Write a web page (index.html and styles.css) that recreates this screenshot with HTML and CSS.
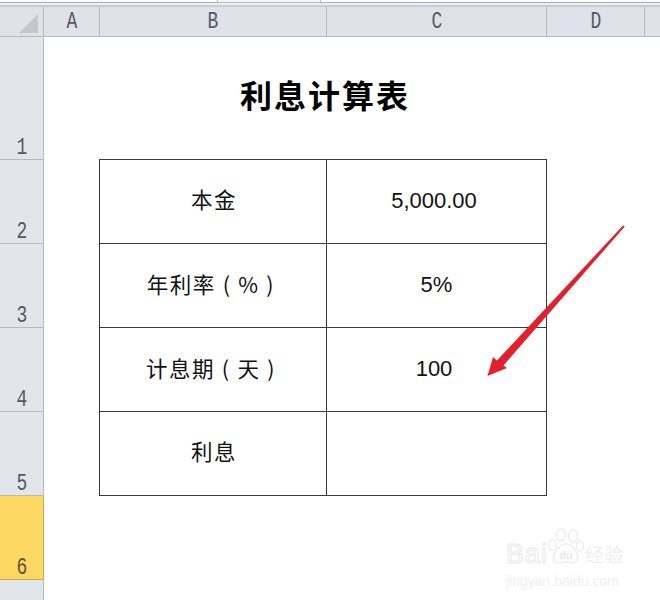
FILE: index.html
```html
<!DOCTYPE html>
<html lang="zh">
<head>
<meta charset="utf-8">
<title>利息计算表</title>
<link rel="stylesheet" href="styles.css">
</head>
<body>
<div class="formula-bar"><div class="formula-tab"></div></div>
<div class="sheet">
  <div class="corner"><svg class="corner-mark" width="20" height="20" viewBox="0 0 20 20"><path d="M0 20 L19 1 V20 Z" fill="#c2c7cb"/></svg></div>
  <div class="col-head"><span class="hd">A</span></div>
  <div class="col-head"><span class="hd">B</span></div>
  <div class="col-head"><span class="hd">C</span></div>
  <div class="col-head"><span class="hd">D</span></div>
  <div class="col-head col-last"></div>

  <div class="row-head row-1"><span class="hd">1</span></div>
  <div class="cell a"></div>
  <div class="cell title">利息计算表</div>
  <div class="cell d"></div>

  <div class="row-head"><span class="hd">2</span></div>
  <div class="cell a"></div>
  <div class="cell box label box-top">本金</div>
  <div class="cell box value box-top">5,000.00</div>
  <div class="cell d"></div>

  <div class="row-head"><span class="hd">3</span></div>
  <div class="cell a"></div>
  <div class="cell box label label-long">年利率 ( % )</div>
  <div class="cell box value value-pct">5%</div>
  <div class="cell d"></div>

  <div class="row-head"><span class="hd">4</span></div>
  <div class="cell a"></div>
  <div class="cell box label label-long">计息期 ( 天 )</div>
  <div class="cell box value">100</div>
  <div class="cell d"></div>

  <div class="row-head"><span class="hd">5</span></div>
  <div class="cell a"></div>
  <div class="cell box label">利息</div>
  <div class="cell box value"></div>
  <div class="cell d"></div>

  <div class="row-head row-active"><span class="hd">6</span></div>
  <div class="cell blank"></div>

  <div class="row-head row-rest"></div>
  <div class="cell blank"></div>
</div>

<svg class="arrow" width="660" height="600" viewBox="0 0 660 600">
  <path d="M624.800 226.500 L503.500 365.500 L507 368 L487.500 376 L493 357 L497 360.500 L623 225.500 Z" fill="#e1202d"/>
</svg>

<div class="watermark">
  <div class="wm-main">
    <span class="wm-bai">Bai</span>
    <svg class="wm-paw" width="36" height="40" viewBox="0 0 36 40">
      <g fill="#fff" stroke="#ededed" stroke-width="1.500">
        <ellipse cx="4.500" cy="17" rx="4" ry="5.500"/>
        <ellipse cx="13" cy="7" rx="4.500" ry="6"/>
        <ellipse cx="25" cy="8" rx="4.500" ry="6"/>
        <ellipse cx="32" cy="18" rx="3.500" ry="5.500"/>
        <path d="M18 16 C25 16 32 27 29 33 C26 37 22 34 18 34 C14 34 9 37 6 33 C3 28 11 16 18 16 Z"/>
      </g>
      <text x="18" y="31" class="wm-du">du</text>
    </svg>
    <span class="wm-jy">经验</span>
  </div>
  <div class="wm-url">jingyan.baidu.com</div>
</div>
</body>
</html>
```

FILE: styles.css
```css
* { box-sizing: border-box; }
html, body { margin: 0; padding: 0; }
body {
  position: relative;
  width: 660px;
  height: 600px;
  overflow: hidden;
  background: #fff;
  font-family: "Liberation Sans", "Noto Sans CJK SC", sans-serif;
  color: #111;
}
.formula-bar {
  position: relative;
  height: 7px;
  background: linear-gradient(#fff 0 2px, #a9adb3 2px 3px, #eef0f3 3px 5px, #c9ccd1 5px 7px);
}
.formula-tab {
  position: absolute;
  left: 217px;
  top: 0;
  width: 104px;
  height: 3px;
  border: 1px solid #b9bdc2;
  border-top: 0;
  background: #f4f5f6;
}
.sheet {
  display: grid;
  grid-template-columns: 44px 56px 227px 220px 98px 15px;
  grid-template-rows: 30px 123px repeat(5, 84px) 20px;
}
.corner, .col-head, .row-head { background: #dfe2e8; color: #555a60; }
.corner {
  display: flex;
  align-items: flex-end;
  justify-content: flex-end;
  padding: 0 4px 3px 0;
  border-right: 1px solid #b6bac0;
  border-bottom: 1px solid #b6bac0;
}
.corner-mark { display: block; }
.col-head {
  display: flex;
  align-items: center;
  justify-content: center;
  border-right: 1px solid #b6bac0;
  border-bottom: 1px solid #b6bac0;
}
.col-last { border-right: 0; }
.row-head {
  display: flex;
  align-items: flex-end;
  justify-content: center;
  border-right: 1px solid #b6bac0;
  border-bottom: 1px solid #b6bac0;
  background: #e2e5ea;
}
.row-active {
  background: #fdd863;
  color: #5e5530;
  border-right-color: #c7a94a;
  border-bottom-color: #c7a94a;
}
.row-rest { border-bottom: 0; }
.hd {
  display: block;
  font-family: "Liberation Mono", monospace;
  font-size: 23px;
  line-height: 22px;
  transform: scaleX(0.78);
}
.col-head .hd { line-height: 26px; }
.cell { background: #fff; }
.a { grid-column: 2; }
.d { grid-column: 5 / 7; }
.blank { grid-column: 2 / 7; }
.title {
  grid-column: 3 / 5;
  display: flex;
  align-items: flex-start;
  justify-content: center;
  padding: 34px 0 0 3px;
  font-family: "Noto Sans CJK SC", sans-serif;
  font-size: 32px;
  line-height: 46px;
  font-weight: 700;
  letter-spacing: 2px;
  color: #000;
}
.box {
  display: flex;
  align-items: center;
  justify-content: center;
  font-size: 22px;
  border-right: 1px solid #3a3a3a;
  border-bottom: 1px solid #3a3a3a;
}
.value { padding: 0 5px 1px 0; }
.value-pct { padding-right: 0; }
.box-top { border-top: 1px solid #3a3a3a; margin-top: -1px; }
.label {
  border-left: 1px solid #3a3a3a;
  margin-left: -1px;
  font-family: "Noto Sans CJK SC", sans-serif;
  font-size: 21.500px;
  letter-spacing: 1.500px;
  padding: 0 0 6px 2px;
  white-space: pre;
}
.label-long { padding: 0 4px 5px 0; word-spacing: 0.500px; }
.arrow { position: absolute; left: 0; top: 0; }
.watermark {
  position: absolute;
  left: 506px;
  top: 528px;
  width: 122px;
  color: #eeeeee;
}
.wm-main { display: flex; align-items: flex-end; height: 40px; }
.wm-bai {
  font-size: 27px;
  line-height: 26px;
  letter-spacing: 1px;
  color: #fff;
  -webkit-text-stroke: 1px #e9e9e9;
  margin-bottom: 1px;
}
.wm-paw { display: block; margin: 0 1px 0 0; flex: none; }
.wm-du { font-size: 11px; font-weight: 700; text-anchor: middle; fill: #e6e6e6; }
.wm-jy { font-family: "Noto Sans CJK SC", sans-serif; font-size: 19px; line-height: 26px; white-space: nowrap; margin-bottom: 1px; }
.wm-url { font-size: 14px; line-height: 14px; white-space: nowrap; margin-top: 6px; color: #f0f0f0; }
```
